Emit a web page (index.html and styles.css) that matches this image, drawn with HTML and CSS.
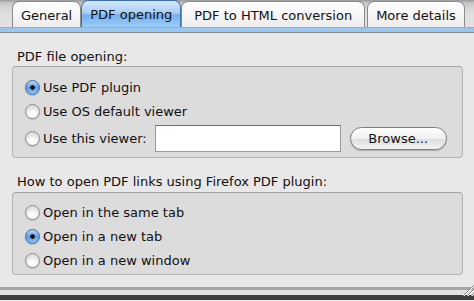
FILE: index.html
```html
<html>
   <head>
      <title>PDF options</title>
      <link rel="stylesheet" href="styles.css">
   </head>
   <body>
      <div id="prefs">
         <div class="tabs">
            <div class="tab">General</div>
            <div class="tab selected">PDF opening</div>
            <div class="tab wide">PDF to HTML conversion</div>
            <div class="tab last">More details</div>
         </div>
         <div class="tabstrip"></div>
         <div class="pane">
            <div class="caption">PDF file opening:</div>
            <div class="group first">
               <label class="row"><span class="radio on"></span>Use PDF plugin</label>
               <label class="row"><span class="radio"></span>Use OS default viewer</label>
               <label class="row viewer">
                  <span class="radio"></span>Use this viewer:
                  <input type="text" class="path" />
                  <button class="browse">Browse...</button>
               </label>
            </div>
            <div class="caption second">How to open PDF links using Firefox PDF plugin:</div>
            <div class="group">
               <label class="row"><span class="radio"></span>Open in the same tab</label>
               <label class="row"><span class="radio on"></span>Open in a new tab</label>
               <label class="row"><span class="radio"></span>Open in a new window</label>
            </div>
         </div>
         <div class="footer"></div>
         <svg class="grip" width="12" height="12" viewBox="0 0 12 12">
            <path d="M12 1 L1 12 M12 5 L5 12 M12 9 L9 12" stroke="#8c8c8c" stroke-width="1" />
            <path d="M12 2 L2 12 M12 6 L6 12 M12 10 L10 12" stroke="#fafafa" stroke-width="1" />
         </svg>
      </div>
   </body>
</html>
```

FILE: styles.css
```css
html {
   margin: 0px;
   padding: 0px;
}

body {
   margin: 0px;
   font-family: "DejaVu Sans", Verdana, sans-serif;
   font-size: 13px;
   color: #111;
   background-color: #e8e8e8;
}

#prefs {
   position: relative;
   width: 474px;
   height: 301px;
   overflow: hidden;
}

/* tab row */

.tabs {
   display: flex;
   height: 27px;
   padding-left: 12px;
   background: linear-gradient(#9a9a9a 0px, #c8c8c8 3px, #dedede 12px, #e2e2e2);
}

.tab {
   height: 26px;
   line-height: 27px;
   margin-top: 1px;
   padding: 0 8px;
   border: 1px solid #8a8a8a;
   border-bottom: none;
   border-radius: 7px 7px 0 0;
   background: linear-gradient(#ffffff, #f6f6f6 50%, #ececec);
   box-sizing: border-box;
}

.tab.wide {
   padding: 0 12px;
}

.tab.last {
   margin-left: 2px;
}

.tab.selected {
   height: 27px;
   margin-top: 0px;
   padding: 0 8px;
   border-color: #3f6fa8;
   background: linear-gradient(#d6e8fb, #a9cff5 45%, #76b1ee 55%, #9ccbf6);
}

.tabstrip {
   height: 4px;
   background-color: #98c7f4;
   border-top: 1px solid #7fb4ea;
   border-bottom: 1px solid #8b8b8b;
}

/* content */

.pane {
   padding: 16px 11px 12px 12px;
}

.caption {
   line-height: 16px;
   padding-left: 5px;
   margin-bottom: 1px;
}

.caption.second {
   margin-top: 16px;
   margin-bottom: 2px;
}

.group {
   background-color: #dcdcdc;
   border: 1px solid #b5b5b5;
   border-top-color: #a4a4a4;
   border-radius: 4px;
   padding: 7px 12px 2px 12px;
}

.group.first {
   padding-top: 8px;
   padding-bottom: 5px;
}

.row {
   display: flex;
   align-items: center;
   height: 24px;
}

.row.viewer {
   height: 27px;
   margin-top: 2px;
}

.radio {
   width: 15px;
   height: 15px;
   margin-right: 3px;
   border-radius: 50%;
   border: 1px solid #8e8e8e;
   box-sizing: border-box;
   background: radial-gradient(circle at 50% 75%, #ffffff 20%, #e4e4e4 60%, #cfcfcf);
   box-shadow: 0 1px 1px rgba(0, 0, 0, 0.15);
}

.radio.on {
   border-color: #3a6aa6;
   background: radial-gradient(circle, #111 0, #111 2px, transparent 2.5px),
      linear-gradient(#b9d8f8, #5e9ee6 50%, #8fc3f5);
}

.path {
   width: 186px;
   height: 27px;
   margin-left: 8px;
   border: 1px solid #9a9a9a;
   border-top-color: #6e6e6e;
   background-color: #fff;
   box-sizing: border-box;
}

.browse {
   width: 97px;
   height: 23px;
   margin-left: 9px;
   font-family: "DejaVu Sans", Verdana, sans-serif;
   font-size: 13px;
   color: #111;
   border: 1px solid #7e7e7e;
   border-radius: 12px;
   background: linear-gradient(#ffffff, #f0f0f0 50%, #dedede 55%, #f4f4f4);
   box-shadow: 0 1px 1px rgba(0, 0, 0, 0.2);
   padding: 0;
}

/* bottom edge */

.footer {
   height: 13px;
   background: linear-gradient(#a6a6a6 0px, #a6a6a6 3px, #e2e2e2 3px, #e2e2e2 8px, #3e3e3e 8px);
}

.grip {
   position: absolute;
   right: 0px;
   bottom: 5px;
}
```
